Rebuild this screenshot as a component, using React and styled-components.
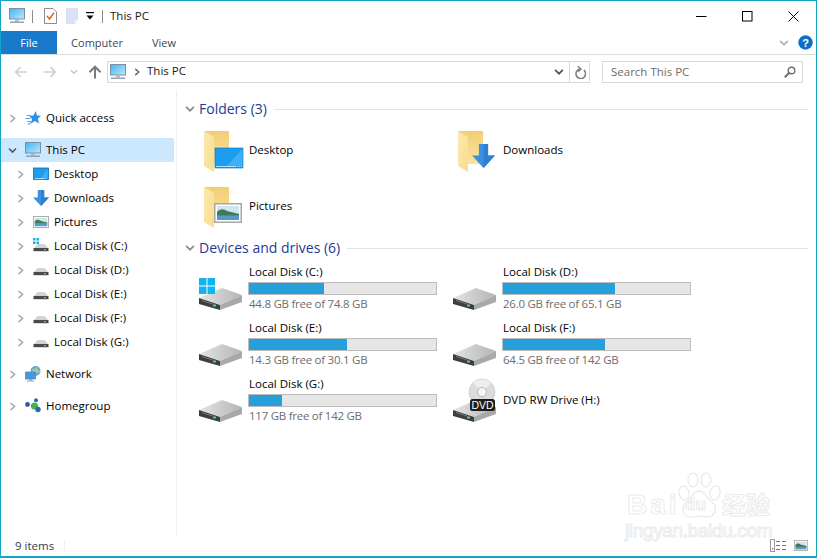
import React from "react";
import styled, { createGlobalStyle } from "styled-components";

const GlobalStyle = createGlobalStyle`
  html, body {
    margin: 0;
    padding: 0;
    background: #fff;
  }
  body {
    font-family: "Open Sans", "Noto Sans", "Noto Sans CJK SC", sans-serif;
    font-size: 11.5px;
    color: #000;
  }
`;

const Window = styled.div`
  position: relative;
  box-sizing: border-box;
  width: 817px;
  height: 558px;
  display: flex;
  flex-direction: column;
  border: 1px solid #17a3c6;
  border-bottom-width: 2px;
  overflow: hidden;
  background: #fff;
`;

const TitleBar = styled.div`
  height: 30px;
  display: flex;
  align-items: center;
  flex-shrink: 0;
`;

const QuickTools = styled.div`
  display: flex;
  align-items: center;
  padding-left: 8px;
  flex: 1;
`;

const ToolSlot = styled.span`
  display: flex;
  width: ${(p) => p.$w}px;
  margin-right: ${(p) => p.$gap || 0}px;
`;

const TitleSep = styled.span`
  width: 1px;
  height: 13px;
  background: #8c8c8c;
  margin-right: ${(p) => p.$gap}px;
`;

const TitleText = styled.span`
  font-size: 11.5px;
  color: #1a1a1a;
  margin-bottom: 2px;
`;

const WinButton = styled.span`
  width: 46px;
  height: 30px;
  display: flex;
  align-items: center;
  justify-content: center;
`;

const TabBar = styled.div`
  height: 23px;
  display: flex;
  align-items: stretch;
  border-bottom: 1px solid #dadbdc;
  flex-shrink: 0;
`;

const Tab = styled.span`
  width: ${(p) => p.$w}px;
  display: flex;
  align-items: center;
  justify-content: center;
  font-size: 11px;
  color: ${(p) => (p.$active ? "#fff" : "#3f4650")};
  background: ${(p) => (p.$active ? "#1979ca" : "transparent")};
`;

const TabRight = styled.div`
  margin-left: auto;
  display: flex;
  align-items: center;
  gap: 9px;
  padding-right: 3px;
`;

const AddressRow = styled.div`
  height: 35px;
  box-sizing: border-box;
  padding: 6px 13px 7px 0;
  display: flex;
  align-items: flex-start;
  flex-shrink: 0;
`;

const NavButtons = styled.div`
  width: 106px;
  height: 22px;
  display: flex;
  align-items: center;
  padding-left: 13px;
  box-sizing: border-box;
`;

const NavSlot = styled.span`
  display: flex;
  margin-right: ${(p) => p.$gap}px;
`;

const AddressBox = styled.div`
  box-sizing: border-box;
  width: 483px;
  height: 22px;
  border: 1px solid #d9d9d9;
  display: flex;
  align-items: center;
  padding-left: 2px;
`;

const Crumb = styled.span`
  color: #1a1a1a;
  margin: 0 0 4px 6px;
  flex: 1;
`;

const CrumbArrow = styled.span`
  display: flex;
  margin-left: 7px;
`;

const AddressEnd = styled.span`
  display: flex;
  align-items: center;
  justify-content: center;
  height: 100%;
  width: ${(p) => p.$w}px;
  border-left: ${(p) => (p.$line ? "1px solid #d9d9d9" : "none")};
`;

const SearchBox = styled.div`
  box-sizing: border-box;
  width: 201px;
  height: 22px;
  margin-left: 12px;
  border: 1px solid #d9d9d9;
  display: flex;
  align-items: center;
  justify-content: space-between;
  padding: 0 6px 0 8px;
  color: #6d6d6d;
`;

const SearchLabel = styled.span`
  margin-bottom: 2px;
`;

const Main = styled.div`
  flex: 1;
  display: flex;
  min-height: 0;
`;

const NavPane = styled.nav`
  width: 176px;
  box-sizing: border-box;
  flex-shrink: 0;
  border-right: 1px solid #efefef;
  padding: 16px 2px 0 0;
  display: flex;
  flex-direction: column;
  gap: 8px;
`;

const NavGroup = styled.div`
  display: flex;
  flex-direction: column;
`;

const NavRow = styled.div`
  height: 24px;
  display: flex;
  align-items: center;
  padding-left: ${(p) => 7 + p.$level * 8}px;
  background: ${(p) => (p.$selected ? "#cce8ff" : "transparent")};
`;

const NavArrow = styled.span`
  width: 9px;
  display: flex;
  margin-right: 8px;
`;

const NavIcon = styled.span`
  width: 16px;
  height: 16px;
  display: flex;
  margin-right: 5px;
`;

const NavLabel = styled.span`
  margin-bottom: 2px;
`;

const Content = styled.section`
  flex: 1;
  padding: 10px 8px 0 0;
`;

const SectionHeader = styled.div`
  height: 18px;
  display: flex;
  align-items: center;
  padding-left: 8px;
  margin-bottom: ${(p) => p.$after}px;
`;

const SectionTitle = styled.span`
  font-size: 14px;
  color: #1e3a96;
  margin: 0 7px 2px 4px;
  white-space: nowrap;
`;

const SectionRule = styled.span`
  flex: 1;
  height: 1px;
  background: #e3e3e3;
`;

const TileGrid = styled.div`
  display: grid;
  grid-template-columns: 254px 254px;
  grid-auto-rows: 56px;
  padding-left: 20px;
  margin-bottom: ${(p) => p.$after || 0}px;
`;

const Tile = styled.div`
  display: flex;
  align-items: center;
  gap: 4px;
`;

const TileIcon = styled.span`
  width: 48px;
  height: 48px;
  flex-shrink: 0;
  display: flex;
`;

const TileLabel = styled.span`
  margin-bottom: 2px;
`;

const DriveInfo = styled.div`
  display: flex;
  flex-direction: column;
  width: 189px;
`;

const DriveName = styled.div`
  height: 16px;
  line-height: 16px;
`;

const Meter = styled.div`
  box-sizing: border-box;
  height: 13px;
  width: 189px;
  border: 1px solid #bcbcbc;
  background: #e6e6e6;
  margin: 2px 0 1px -1px;
`;

const MeterFill = styled.div`
  height: 100%;
  background: #26a0da;
  width: ${(p) => p.$used}%;
`;

const DriveFree = styled.div`
  height: 16px;
  line-height: 16px;
  color: #6d6d6d;
  letter-spacing: -0.26px;
`;

const StatusBar = styled.footer`
  height: 21px;
  flex-shrink: 0;
  display: flex;
  align-items: center;
  padding: 0 8px 0 14px;
  color: #333c52;
`;

const StatusSep = styled.span`
  width: 1px;
  height: 12px;
  background: #efefef;
  margin-left: 10px;
`;

const ViewToggles = styled.span`
  margin-left: auto;
  display: flex;
  align-items: center;
  gap: 8px;
`;

const Watermark = styled.div`
  position: absolute;
  left: 624px;
  top: 468px;
  width: 152px;
  height: 74px;
  display: flex;
  flex-direction: column;
  pointer-events: none;
  font-family: "Liberation Sans", "Noto Sans CJK SC", sans-serif;
  color: #fff;
  -webkit-text-stroke: 1px #ebebeb;
`;

const WatermarkTop = styled.div`
  height: 50px;
  display: flex;
  align-items: flex-end;
`;

const WatermarkBrand = styled.span`
  font-size: 28px;
  font-weight: 700;
  line-height: 28px;
  margin-left: 2px;
  width: 49px;
  letter-spacing: 3px;
`;

const WatermarkPaw = styled.span`
  width: 46px;
  height: 48px;
  display: flex;
  position: relative;
`;

const WatermarkDu = styled.span`
  position: absolute;
  left: 9px;
  bottom: 4px;
  font-size: 17px;
  font-weight: 700;
`;

const WatermarkCn = styled.span`
  font-size: 24px;
  font-weight: 700;
  line-height: 26px;
  white-space: nowrap;
`;

const WatermarkUrl = styled.div`
  font-size: 19px;
  line-height: 24px;
  white-space: nowrap;
  letter-spacing: -0.35px;
`;

function Chevron({ open, color = "#a6a6a6", size = 9 }) {
  return (
    <svg width={size} height={size} viewBox="0 0 9 9" fill="none">
      <path
        d={open ? "M1 2.5 L4.5 6 L8 2.5" : "M2.5 1 L6.5 4.5 L2.5 8"}
        stroke={color}
        strokeWidth="1.6"
      />
    </svg>
  );
}

function MonitorIcon({ size = 16 }) {
  return (
    <svg width={size} height={size} viewBox="0 0 16 16">
      <defs>
        <linearGradient id="screenGrad" x1="0" y1="0" x2="1" y2="1">
          <stop offset="0" stopColor="#3fb4f2" />
          <stop offset="1" stopColor="#bfe8fb" />
        </linearGradient>
      </defs>
      <rect x="0.5" y="0.5" width="15" height="10.5" fill="url(#screenGrad)" stroke="#7d8fa3" />
      <rect x="6" y="11.5" width="4" height="2" fill="#aeb9c4" />
      <rect x="1" y="13.5" width="14" height="1.4" fill="#8e9aa7" />
    </svg>
  );
}

function SmallDesktop() {
  return (
    <svg width="16" height="16" viewBox="0 0 16 16">
      <rect x="0.5" y="2" width="15" height="11.5" fill="#1b9df0" stroke="#0f6cb0" strokeWidth="0.8" />
      <path d="M8 12.5 L14.6 3 V12.5 Z" fill="#3fb0f6" />
      <path d="M2 12.6 H14" stroke="#d8f0ff" strokeWidth="0.8" strokeDasharray="9 1 1 1 1 1" />
    </svg>
  );
}

function ArrowDown({ x = 0, y = 0, w = 16, h = 16 }) {
  const sx = w / 16;
  const sy = h / 16;
  return (
    <g transform={`translate(${x} ${y}) scale(${sx} ${sy})`}>
      <path d="M4.8 0 H11.2 V7.6 H16 L8 16 L0 7.6 H4.8 Z" fill="#3d8fe0" />
      <path d="M8 0 H11.2 V7.6 H16 L8 16 Z" fill="#2f7ed0" />
    </g>
  );
}

function SmallDownloads() {
  return (
    <svg width="16" height="16" viewBox="0 0 16 16">
      <ArrowDown />
    </svg>
  );
}

function PictureFrame({ x = 0, y = 0, w = 16, h = 12 }) {
  const sx = w / 28;
  const sy = h / 20;
  return (
    <g transform={`translate(${x} ${y}) scale(${sx} ${sy})`}>
      <rect x="0.75" y="0.75" width="26.5" height="18.5" fill="#fff" stroke="#a6a6a6" strokeWidth="1.5" />
      <rect x="3" y="3" width="22" height="14" fill="#cfe6ef" />
      <path d="M3 9 C6 5 10 6 13 8 C17 9 21 10 25 11 V13 H3 Z" fill="#3f7a5e" />
      <rect x="3" y="12.5" width="22" height="4.5" fill="#5a9cc0" />
    </g>
  );
}

function SmallPictures() {
  return (
    <svg width="16" height="16" viewBox="0 0 16 16">
      <PictureFrame y="2" w="16" h="12" />
    </svg>
  );
}

function WinLogo({ x, y, size }) {
  const c = (size - 1) / 2;
  return (
    <g fill="#12b4f0">
      <rect x={x} y={y} width={c} height={c} />
      <rect x={x + c + 1} y={y} width={c} height={c} />
      <rect x={x} y={y + c + 1} width={c} height={c} />
      <rect x={x + c + 1} y={y + c + 1} width={c} height={c} />
    </g>
  );
}

function SmallDisk({ system }) {
  return (
    <svg width="16" height="16" viewBox="0 0 16 16">
      {system && <WinLogo x={0} y={0} size={6} />}
      <path d="M1 10 L4.5 6 H11.5 L15 10 Z" fill="#d2d2d2" />
      <rect x="0.5" y="10" width="15" height="3.2" fill="#4a4a4a" />
      <rect x="11" y="11" width="2" height="1.2" fill="#4fd34f" />
    </svg>
  );
}

function NetworkIcon() {
  return (
    <svg width="16" height="16" viewBox="0 0 16 16">
      <circle cx="10.5" cy="5" r="5" fill="#6aa6d8" />
      <path d="M7 3 C9 4 10 2 12 1.5 C12 4 14 4 15 6 C12 7 10 8 8 7 Z" fill="#a3c9a0" />
      <rect x="0.5" y="6" width="10" height="7" fill="#3b9be3" stroke="#6b7f92" strokeWidth="0.7" />
      <rect x="4" y="13" width="3" height="1.5" fill="#9aa7b3" />
      <rect x="2" y="14.5" width="7" height="1" fill="#8e9aa7" />
    </svg>
  );
}

function HomegroupIcon() {
  return (
    <svg width="16" height="16" viewBox="0 0 16 16">
      <circle cx="2.5" cy="6.5" r="2.4" fill="#1f5fa8" />
      <circle cx="11" cy="2.2" r="2" fill="#1f6fb8" />
      <circle cx="9.5" cy="8" r="3.6" fill="#4caf50" />
      <circle cx="13" cy="11.5" r="2.7" fill="#1f6fb8" />
    </svg>
  );
}

function StarIcon() {
  return (
    <svg width="16" height="16" viewBox="0 0 16 16">
      <path
        d="M10.5 1 L12 5.4 L16 5.8 L12.9 8.6 L14 13.4 L9.8 10.9 L6 13.5 L7 8.9 L4.4 6 L8.6 5.6 Z"
        fill="#2f8fe6"
      />
      <path d="M1.5 5.5 H6 M0.5 8.5 H5.5 M2 11.5 H6.5 M3 14.5 L7 12" stroke="#5aa9ee" strokeWidth="1.1" />
    </svg>
  );
}

function FolderIcon({ children }) {
  return (
    <svg width="48" height="48" viewBox="0 0 48 48">
      <defs>
        <linearGradient id="folderBack" x1="0" y1="0" x2="0" y2="1">
          <stop offset="0" stopColor="#f2cf73" />
          <stop offset="1" stopColor="#f9e3a0" />
        </linearGradient>
        <linearGradient id="folderFlap" x1="0" y1="0" x2="1" y2="1">
          <stop offset="0" stopColor="#fbeab0" />
          <stop offset="1" stopColor="#f7dc8c" />
        </linearGradient>
      </defs>
      <rect x="7" y="5" width="25" height="33" fill="url(#folderBack)" />
      <path d="M7 5 L17 11 V46 L7 40 Z" fill="url(#folderFlap)" />
      {children}
    </svg>
  );
}

function DriveBody() {
  return (
    <g>
      <defs>
        <linearGradient id="driveTop" x1="0" y1="0" x2="1" y2="0">
          <stop offset="0" stopColor="#e4e4e4" />
          <stop offset="1" stopColor="#b4b4b4" />
        </linearGradient>
      </defs>
      <path d="M2 34 L25 24 L45 31 L23 41 Z" fill="url(#driveTop)" />
      <path d="M2 34 L23 41 V46 L2 40 Z" fill="#3e3e3e" />
      <path d="M23 41 L45 31 V38 L23 46 Z" fill="#a9a9a9" />
      <path d="M5 36.5 L16 40" stroke="#777" strokeWidth="1" />
      <rect x="16" y="40.5" width="3" height="2" fill="#3ddc5a" />
    </g>
  );
}

function DriveIcon({ system }) {
  return (
    <svg width="48" height="48" viewBox="0 0 48 48">
      <DriveBody />
      {system && <WinLogo x={2} y={14} size={16} />}
    </svg>
  );
}

function DvdIcon() {
  return (
    <svg width="48" height="48" viewBox="0 0 48 48">
      <DriveBody />
      <circle cx="31" cy="16" r="13" fill="#dcdcdc" stroke="#c4c4c4" strokeWidth="0.6" />
      <path d="M31 16 L22 7 A13 13 0 0 1 40 7 Z" fill="#eeeeee" />
      <circle cx="31" cy="16" r="4.5" fill="#f7f7f7" stroke="#a8a8a8" strokeWidth="0.8" />
      <rect x="19" y="23" width="25" height="12" rx="2.5" fill="#1c1c1c" />
      <text x="31.5" y="33" textAnchor="middle" fontSize="10.5" fontFamily="Liberation Sans, sans-serif" fill="#fff">
        DVD
      </text>
    </svg>
  );
}

function NavArrowIcon({ color, back }) {
  return (
    <svg width="14" height="12" viewBox="0 0 14 12" fill="none" style={back ? undefined : { transform: "scaleX(-1)" }}>
      <path d="M13 6 H2 M6.5 1.2 L1.7 6 L6.5 10.8" stroke={color} strokeWidth="1.7" />
    </svg>
  );
}

function UpArrow() {
  return (
    <svg width="14" height="14" viewBox="0 0 14 14" fill="none">
      <path d="M7 13.5 V2 M1.5 7.2 L7 1.7 L12.5 7.2" stroke="#7a7a7a" strokeWidth="2" />
    </svg>
  );
}

const folders = [
  {
    name: "Desktop",
    overlay: (
      <g>
        <rect x="18" y="22" width="28" height="20" fill="#1b9df0" stroke="#0f6cb0" strokeWidth="0.6" />
        <path d="M30 40 L45.5 23 V40 Z" fill="#3fb0f6" />
        <path d="M19 40.5 H45" stroke="#d8f0ff" strokeWidth="0.8" strokeDasharray="20 1 1 1 1 1" />
      </g>
    ),
  },
  { name: "Downloads", overlay: <ArrowDown x={21} y={18} w={23} h={24} /> },
  { name: "Pictures", overlay: <PictureFrame x={17} y={21} w={28} h={20} /> },
];

const drives = [
  { letter: "C", free: "44.8 GB free of 74.8 GB", used: 40, system: true },
  { letter: "D", free: "26.0 GB free of 65.1 GB", used: 60 },
  { letter: "E", free: "14.3 GB free of 30.1 GB", used: 52.5 },
  { letter: "F", free: "64.5 GB free of 142 GB", used: 54.6 },
  { letter: "G", free: "117 GB free of 142 GB", used: 17.6 },
];

const navChildren = [
  { label: "Desktop", icon: <SmallDesktop /> },
  { label: "Downloads", icon: <SmallDownloads /> },
  { label: "Pictures", icon: <SmallPictures /> },
  ...drives.map((d) => ({
    label: `Local Disk (${d.letter}:)`,
    icon: <SmallDisk system={d.system} />,
  })),
];

function NavItem({ level = 0, open, selected, icon, label }) {
  return (
    <NavRow $level={level} $selected={selected}>
      <NavArrow>
        <Chevron open={open} color={open ? "#555" : "#a6a6a6"} />
      </NavArrow>
      <NavIcon>{icon}</NavIcon>
      <NavLabel>{label}</NavLabel>
    </NavRow>
  );
}

export default function App() {
  return (
    <>
      <GlobalStyle />
      <Window>
        <TitleBar>
          <QuickTools>
            <ToolSlot $w={16} $gap={7}>
              <MonitorIcon />
            </ToolSlot>
            <TitleSep $gap={11} />
            <ToolSlot $w={13} $gap={9}>
              <svg width="13" height="16" viewBox="0 0 13 16">
                <path d="M0.5 0.5 H9 L12.5 4 V15.5 H0.5 Z" fill="#fff" stroke="#8c8c8c" />
                <path d="M3 8 L5.5 11 L10 4.8" fill="none" stroke="#e8632a" strokeWidth="1.6" />
              </svg>
            </ToolSlot>
            <ToolSlot $w={13} $gap={7}>
              <svg width="13" height="16" viewBox="0 0 13 16">
                <path d="M0 0 H12 V12 L9 16 H0 Z" fill="#d9e3f2" />
                <path d="M9 16 V12 H12 Z" fill="#f0f4fa" />
              </svg>
            </ToolSlot>
            <ToolSlot $w={8} $gap={8}>
              <svg width="8" height="9" viewBox="0 0 8 9">
                <rect x="0" y="0" width="8" height="1.2" fill="#000" />
                <path d="M0.5 3.5 H7.5 L4 7.5 Z" fill="#000" />
              </svg>
            </ToolSlot>
            <TitleSep $gap={7} />
            <TitleText>This PC</TitleText>
          </QuickTools>
          <WinButton>
            <svg width="11" height="11" viewBox="0 0 11 11">
              <path d="M0 5.5 H10.5" stroke="#000" strokeWidth="1" />
            </svg>
          </WinButton>
          <WinButton>
            <svg width="11" height="11" viewBox="0 0 11 11">
              <rect x="0.5" y="0.5" width="9.5" height="9.5" fill="none" stroke="#000" />
            </svg>
          </WinButton>
          <WinButton>
            <svg width="11" height="11" viewBox="0 0 11 11">
              <path d="M0.5 0.5 L10.5 10.5 M10.5 0.5 L0.5 10.5" stroke="#000" strokeWidth="1" />
            </svg>
          </WinButton>
        </TitleBar>

        <TabBar>
          <Tab $active $w={56}>File</Tab>
          <Tab $w={80}>Computer</Tab>
          <Tab $w={54}>View</Tab>
          <TabRight>
            <Chevron open color="#b5b5b5" size={10} />
            <svg width="15" height="15" viewBox="0 0 15 15">
              <circle cx="7.5" cy="7.5" r="7.2" fill="#0f6fc6" />
              <text x="7.5" y="11.5" textAnchor="middle" fontSize="11" fontWeight="700" fontFamily="Liberation Sans, sans-serif" fill="#fff">
                ?
              </text>
            </svg>
          </TabRight>
        </TabBar>

        <AddressRow>
          <NavButtons>
            <NavSlot $gap={15}>
              <NavArrowIcon back color="#d0d0d0" />
            </NavSlot>
            <NavSlot $gap={13}>
              <NavArrowIcon color="#d0d0d0" />
            </NavSlot>
            <NavSlot $gap={10}>
              <Chevron open color="#c8c8c8" size={8} />
            </NavSlot>
            <NavSlot $gap={0}>
              <UpArrow />
            </NavSlot>
          </NavButtons>
          <AddressBox>
            <MonitorIcon />
            <CrumbArrow>
              <Chevron color="#666" size={8} />
            </CrumbArrow>
            <Crumb>This PC</Crumb>
            <AddressEnd $w={20}>
              <Chevron open color="#555" size={10} />
            </AddressEnd>
            <AddressEnd $w={19} $line>
              <svg width="12" height="13" viewBox="0 0 12 13" fill="none">
                <path d="M9.8 4 A4.8 4.8 0 1 1 6 3" stroke="#7a7a7a" strokeWidth="1.5" />
                <path d="M3.6 0.3 L7 3 L4 5.6" stroke="#7a7a7a" strokeWidth="1.4" />
              </svg>
            </AddressEnd>
          </AddressBox>
          <SearchBox>
            <SearchLabel>Search This PC</SearchLabel>
            <svg width="12" height="12" viewBox="0 0 12 12" fill="none">
              <circle cx="7.5" cy="4.5" r="3.3" stroke="#6d6d6d" strokeWidth="1.4" />
              <path d="M5 7 L0.8 11.2" stroke="#6d6d6d" strokeWidth="2" />
            </svg>
          </SearchBox>
        </AddressRow>

        <Main>
          <NavPane>
            <NavGroup>
              <NavItem icon={<StarIcon />} label="Quick access" />
            </NavGroup>
            <NavGroup>
              <NavItem open selected icon={<MonitorIcon />} label="This PC" />
              {navChildren.map((c) => (
                <NavItem key={c.label} level={1} icon={c.icon} label={c.label} />
              ))}
            </NavGroup>
            <NavGroup>
              <NavItem icon={<NetworkIcon />} label="Network" />
            </NavGroup>
            <NavGroup>
              <NavItem icon={<HomegroupIcon />} label="Homegroup" />
            </NavGroup>
          </NavPane>

          <Content>
            <SectionHeader $after={4}>
              <Chevron open color="#8d8d8d" size={10} />
              <SectionTitle>Folders (3)</SectionTitle>
              <SectionRule />
            </SectionHeader>
            <TileGrid $after={5}>
              {folders.map((f) => (
                <Tile key={f.name}>
                  <TileIcon>
                    <FolderIcon>{f.overlay}</FolderIcon>
                  </TileIcon>
                  <TileLabel>{f.name}</TileLabel>
                </Tile>
              ))}
            </TileGrid>

            <SectionHeader $after={3}>
              <Chevron open color="#8d8d8d" size={10} />
              <SectionTitle>Devices and drives (6)</SectionTitle>
              <SectionRule />
            </SectionHeader>
            <TileGrid>
              {drives.map((d) => (
                <Tile key={d.letter}>
                  <TileIcon>
                    <DriveIcon system={d.system} />
                  </TileIcon>
                  <DriveInfo>
                    <DriveName>Local Disk ({d.letter}:)</DriveName>
                    <Meter>
                      <MeterFill $used={d.used} />
                    </Meter>
                    <DriveFree>{d.free}</DriveFree>
                  </DriveInfo>
                </Tile>
              ))}
              <Tile>
                <TileIcon>
                  <DvdIcon />
                </TileIcon>
                <TileLabel>DVD RW Drive (H:)</TileLabel>
              </Tile>
            </TileGrid>
          </Content>
        </Main>

        <StatusBar>
          9 items
          <StatusSep />
          <ViewToggles>
            <svg width="16" height="13" viewBox="0 0 16 13">
              <rect x="0.5" y="0.5" width="4" height="12" fill="#fff" stroke="#9a9a9a" />
              <rect x="2" y="9" width="1.2" height="1.6" fill="#d04040" />
              <path d="M6 2.5 H10 M12 2.5 H16 M6 6.5 H10 M12 6.5 H16 M6 10.5 H10 M12 10.5 H16" stroke="#777" strokeWidth="1" />
            </svg>
            <svg width="14" height="11" viewBox="0 0 14 11">
              <PictureFrame w="14" h="11" />
            </svg>
          </ViewToggles>
        </StatusBar>

        <Watermark>
          <WatermarkTop>
            <WatermarkBrand>Bai</WatermarkBrand>
            <WatermarkPaw>
              <svg width="46" height="48" viewBox="0 0 46 48" fill="#fff" stroke="#ebebeb" strokeWidth="1.4">
                <ellipse cx="8" cy="22" rx="5" ry="7" transform="rotate(-15 8 22)" />
                <ellipse cx="17" cy="9" rx="5" ry="7" />
                <ellipse cx="30" cy="9" rx="5" ry="7" />
                <ellipse cx="39" cy="22" rx="5" ry="7" transform="rotate(15 39 22)" />
                <path d="M23 20 C30 20 30 27 36 31 C43 37 38 47 30 46 C26 45 20 45 16 46 C7 47 4 37 11 31 C16 27 17 20 23 20 Z" />
              </svg>
              <WatermarkDu>du</WatermarkDu>
            </WatermarkPaw>
            <WatermarkCn>经验</WatermarkCn>
          </WatermarkTop>
          <WatermarkUrl>jingyan.baidu.com</WatermarkUrl>
        </Watermark>
      </Window>
    </>
  );
}
